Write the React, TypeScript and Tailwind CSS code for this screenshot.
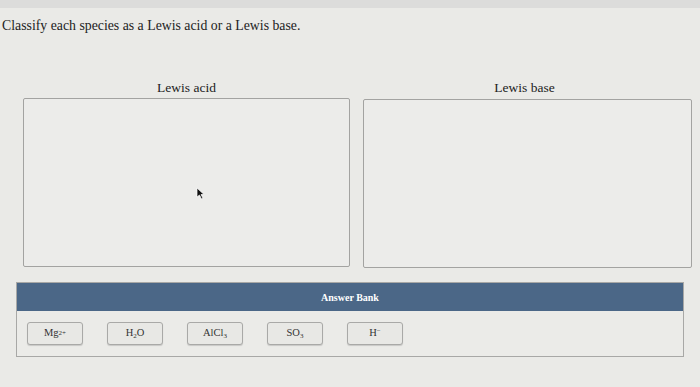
import React from 'react';

const CHIPS: React.ReactNode[] = [
  <>Mg<sup className="text-[7px] relative -top-[1px]">2+</sup></>,
  <>H<sub className="text-[7px]">2</sub>O</>,
  <>AlCl<sub className="text-[7px]">3</sub></>,
  <>SO<sub className="text-[7px]">3</sub></>,
  <>H<sup className="text-[7px]">−</sup></>,
];

export default function App() {
  return (
    <div className="relative w-[700px] h-[387px] overflow-hidden bg-[#eaeae7] text-[#222] font-['Liberation_Serif',serif]">
      {/* top strip */}
      <div className="h-[8px] bg-[#dcdcdb]" />

      <p className="mt-[10px] pl-[2px] text-[13.8px] leading-[16px]">
        Classify each species as a Lewis acid or a Lewis base.
      </p>

      {/* drop zones */}
      <div className="mt-[46px] flex gap-[13px] pl-[23px]">
        <div className="flex w-[327px] flex-col items-center">
          <div className="text-[13.5px] leading-[16px]">Lewis acid</div>
          <div className="mt-[2px] h-[169px] w-full rounded-[2px] border border-[#a3a3a1] bg-[#ececea]" />
        </div>
        <div className="flex w-[329px] flex-col items-center">
          <div className="pr-[6px] text-[13.5px] leading-[16px]">Lewis base</div>
          <div className="mt-[3px] h-[169px] w-full rounded-[2px] border border-[#a3a3a1] bg-[#ececea]" />
        </div>
      </div>

      {/* answer bank */}
      <div className="mx-[16px] mt-[14px] border border-[#a8a8a6]">
        <div className="flex h-[28px] items-center justify-center bg-[#4b6787] text-[10px] font-bold text-white">
          Answer Bank
        </div>
        <div className="flex h-[45px] items-center gap-[24px] bg-[#ebebe8] pl-[10px]">
          {CHIPS.map((c, i) => (
            <div
              key={i}
              className="flex h-[23px] w-[56px] items-center justify-center rounded-[3px] border border-[#a9a9a7] bg-[#e8e8e5] text-[10.5px] leading-none text-[#333] shadow-[0_1px_1px_rgba(0,0,0,0.15)]"
            >
              <span>{c}</span>
            </div>
          ))}
        </div>
      </div>

      {/* mouse cursor */}
      <svg className="absolute left-[196px] top-[187px]" width="9" height="13" viewBox="0 0 9 13">
        <path d="M1 1 L1 10 L3.5 8 L5.5 12 L7 11.3 L5 7.5 L8 7.5 Z" fill="#111" stroke="#fff" strokeWidth="0.7" />
      </svg>
    </div>
  );
}
